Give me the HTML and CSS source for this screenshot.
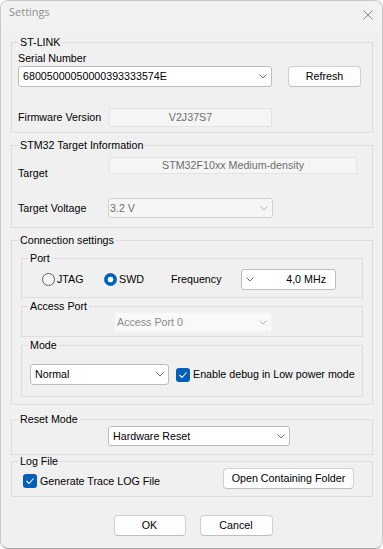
FILE: index.html
```html
<!DOCTYPE html>
<html>
<head>
<meta charset="utf-8">
<link rel="stylesheet" href="styles.css">
</head>
<body>
<div class="window">
  <div class="titlebar">
    <span class="title">Settings</span>
    <svg class="close" width="10" height="10" viewBox="0 0 10 10"><path d="M0.5 0.5L9.5 9.5M9.5 0.5L0.5 9.5" stroke="#8a8a8a" stroke-width="1" fill="none"/></svg>
  </div>
  <div class="content">
    <fieldset class="group g1">
      <legend>ST-LINK</legend>
      <div class="gb gb1">
        <div class="serial-label">Serial Number</div>
        <div class="serial-row">
          <div class="combo serial-combo"><span class="val">68005000050000393333574E</span><svg class="chev" width="8" height="5" viewBox="0 0 8 5"><path d="M0.5 0.5L4 4L7.5 0.5" stroke="#707070" fill="none"/></svg></div>
          <button class="btn refresh">Refresh</button>
        </div>
        <div class="fw-row">
          <span class="fw-label">Firmware Version</span>
          <div class="field fw-field">V2J37S7</div>
        </div>
      </div>
    </fieldset>

    <fieldset class="group g2">
      <legend>STM32 Target Information</legend>
      <div class="gb gb2">
        <div class="target-row">
          <span class="target-label">Target</span>
          <div class="field target-field">STM32F10xx Medium-density</div>
        </div>
        <div class="volt-row">
          <span class="volt-label">Target Voltage</span>
          <div class="combo dis volt-combo"><span class="val">3.2 V</span><svg class="chev" width="8" height="5" viewBox="0 0 8 5"><path d="M0.5 0.5L4 4L7.5 0.5" stroke="#b4b4b4" fill="none"/></svg></div>
        </div>
      </div>
    </fieldset>

    <fieldset class="group g3">
      <legend>Connection settings</legend>
      <div class="gb gb3">
        <fieldset class="group port">
          <legend>Port</legend>
          <div class="gb gb-port">
            <div class="port-row">
              <div class="radio-item jtag"><span class="radio"></span><span>JTAG</span></div>
              <div class="radio-item swd"><span class="radio on"></span><span>SWD</span></div>
              <span class="freq-label">Frequency</span>
              <div class="combo freq-combo"><svg class="chev" width="8" height="5" viewBox="0 0 8 5"><path d="M0.5 0.5L4 4L7.5 0.5" stroke="#707070" fill="none"/></svg><span class="val freq-val">4,0 MHz</span></div>
            </div>
          </div>
        </fieldset>
        <fieldset class="group access">
          <legend>Access Port</legend>
          <div class="gb gb-access">
            <div class="combo dis2 access-combo"><span class="val">Access Port 0</span><svg class="chev" width="8" height="5" viewBox="0 0 8 5"><path d="M0.5 0.5L4 4L7.5 0.5" stroke="#b4b4b4" fill="none"/></svg></div>
          </div>
        </fieldset>
        <fieldset class="group mode">
          <legend>Mode</legend>
          <div class="gb gb-mode">
            <div class="mode-row">
              <div class="combo mode-combo"><span class="val">Normal</span><svg class="chev" width="8" height="5" viewBox="0 0 8 5"><path d="M0.5 0.5L4 4L7.5 0.5" stroke="#707070" fill="none"/></svg></div>
              <div class="check-item lp"><span class="cb"><svg width="10" height="8" viewBox="0 0 10 8"><path d="M1.5 4L4 6.5L8.5 1.5" stroke="#fff" stroke-width="1.1" fill="none"/></svg></span><span>Enable debug in Low power mode</span></div>
            </div>
          </div>
        </fieldset>
      </div>
    </fieldset>

    <fieldset class="group g4">
      <legend>Reset Mode</legend>
      <div class="gb gb4">
        <div class="combo reset-combo"><span class="val">Hardware Reset</span><svg class="chev" width="8" height="5" viewBox="0 0 8 5"><path d="M0.5 0.5L4 4L7.5 0.5" stroke="#707070" fill="none"/></svg></div>
      </div>
    </fieldset>

    <fieldset class="group g5">
      <legend>Log File</legend>
      <div class="gb gb5">
        <div class="log-row">
          <div class="check-item log-check"><span class="cb"><svg width="10" height="8" viewBox="0 0 10 8"><path d="M1.5 4L4 6.5L8.5 1.5" stroke="#fff" stroke-width="1.1" fill="none"/></svg></span><span>Generate Trace LOG File</span></div>
          <button class="btn open-btn">Open Containing Folder</button>
        </div>
      </div>
    </fieldset>

    <div class="footer">
      <button class="btn ok">OK</button>
      <button class="btn cancel">Cancel</button>
    </div>
  </div>
</div>
</body>
</html>
```

FILE: styles.css
```css
* { box-sizing: border-box; }
html, body { margin: 0; padding: 0; background: #ffffff; }
body {
  font-family: "Liberation Sans", Arial, sans-serif;
  font-size: 10.7px;
  line-height: 13px;
  color: #000;
}
.window {
  width: 383px;
  height: 549px;
  background: #f0f0f0;
  border: 1px solid #c8c8c8;
  border-bottom-color: #a8a8a8;
  border-radius: 8px;
  overflow: hidden;
}
.titlebar {
  height: 29px;
  display: flex;
  justify-content: space-between;
  align-items: flex-start;
  padding: 3px 9px 0 8px;
  background: #f2f2f2;
}
.title {
  font-family: "Open Sans", "Noto Sans", sans-serif;
  font-size: 11px;
  line-height: 15px;
  color: #8f8f8f;
}
.close { margin-top: 6px; display: block; }
.content { padding: 0 9px 0 10px; }

.group {
  margin: 0;
  min-width: 0;
  border: 1px solid #dcdcdc;
  padding: 0;
}
.group > legend {
  margin-left: 6px;
  padding: 0 2px;
  line-height: 13px;
}

.combo {
  display: flex;
  align-items: center;
  background: #ffffff;
  border: 1px solid #bcbcbc;
  border-radius: 3px;
  padding: 0 4px 0 4px;
  white-space: nowrap;
}
.combo .val { flex: 1; }
.chev { display: block; flex: none; }
.combo.dis {
  background: #f6f6f6;
  border-color: #cfcfcf;
  color: #6d6d6d;
  padding-left: 1px;
}
.combo.dis2 {
  background: #f9f9f9;
  border-color: #f3f3f3;
  color: #8a8a8a;
  padding-left: 2px;
}
.field {
  display: flex;
  align-items: center;
  justify-content: center;
  background: #f5f5f5;
  border: 1px solid #e3e3e3;
  color: #6d6d6d;
}
.btn {
  font-family: inherit;
  font-size: 10.7px;
  line-height: 13px;
  color: #000;
  background: #fdfdfd;
  border: 1px solid #d0d0d0;
  border-bottom-color: #bdbdbd;
  border-radius: 4px;
  padding: 0;
}

/* ST-LINK */
.g1 { margin-top: 6px; }
.gb1 { padding: 0 6px 5px; }
.serial-label { padding-top: 3px; }
.serial-row { display: flex; margin-top: 1px; height: 21px; }
.serial-combo { width: 254px; height: 21px; }
.refresh { width: 73px; height: 21px; margin-left: 16px; }
.fw-row { display: flex; align-items: center; margin-top: 21px; height: 19px; }
.fw-label { width: 91px; }
.fw-field { width: 163px; height: 19px; }

/* STM32 */
.g2 { margin-top: 6px; }
.gb2 { padding: 5px 6px 9px; }
.target-row { display: flex; align-items: flex-start; }
.target-label { width: 91px; margin-top: 10px; }
.target-field { width: 248px; height: 17px; }
.volt-row { display: flex; align-items: center; margin-top: 18px; height: 20px; }
.volt-label { width: 90px; }
.volt-combo { width: 165px; height: 20px; }

/* Connection */
.g3 { margin-top: 6px; }
.gb3 { padding: 5px 9px 7px; }
.gb-port { padding: 4px 0 7px 20px; }
.port-row { display: flex; align-items: center; height: 21px; }
.radio-item { display: flex; align-items: center; gap: 2px; }
.jtag { width: 62px; }
.swd { width: 67px; }
.radio {
  width: 13px;
  height: 13px;
  border-radius: 50%;
  border: 1px solid #5c5c5c;
  background: #f6f6f6;
}
.radio.on {
  border-color: #005fb8;
  background: radial-gradient(circle, #ffffff 0 2.6px, #005fb8 3.2px);
}
.freq-label { width: 70px; }
.freq-combo { width: 95px; height: 21px; }
.freq-val { text-align: right; padding-right: 5px; }

.access { margin-top: 2px; }
.gb-access { padding: 0 0 4px 92px; }
.access-combo { width: 158px; height: 20px; margin-top: -1px; }

.mode { margin-top: 2px; }
.gb-mode { padding: 12px 0 11px 8px; }
.mode-row { display: flex; align-items: center; height: 21px; }
.mode-combo { width: 139px; height: 21px; }
.check-item { display: flex; align-items: center; gap: 3px; white-space: nowrap; }
.lp { margin-left: 7px; }
.cb {
  width: 14px;
  height: 14px;
  border-radius: 3px;
  background: #005fb8;
  display: flex;
  align-items: center;
  justify-content: center;
}
.cb svg { display: block; }

/* Reset */
.g4 { margin-top: 8px; }
.gb4 { padding: 0 6px 8px; }
.reset-combo { margin-left: 90px; width: 182px; height: 20px; }

/* Log */
.g5 { margin-top: 0; }
.gb5 { padding: 0 18px 7px 11px; }
.log-row { display: flex; justify-content: space-between; align-items: flex-start; height: 21px; }
.log-check { margin-top: 6px; }
.open-btn { width: 131px; height: 21px; }

/* Footer */
.footer { display: flex; justify-content: center; gap: 14px; margin-top: 18px; padding-left: 2px; }
.ok { width: 72px; height: 21px; }
.cancel { width: 73px; height: 21px; }
```
